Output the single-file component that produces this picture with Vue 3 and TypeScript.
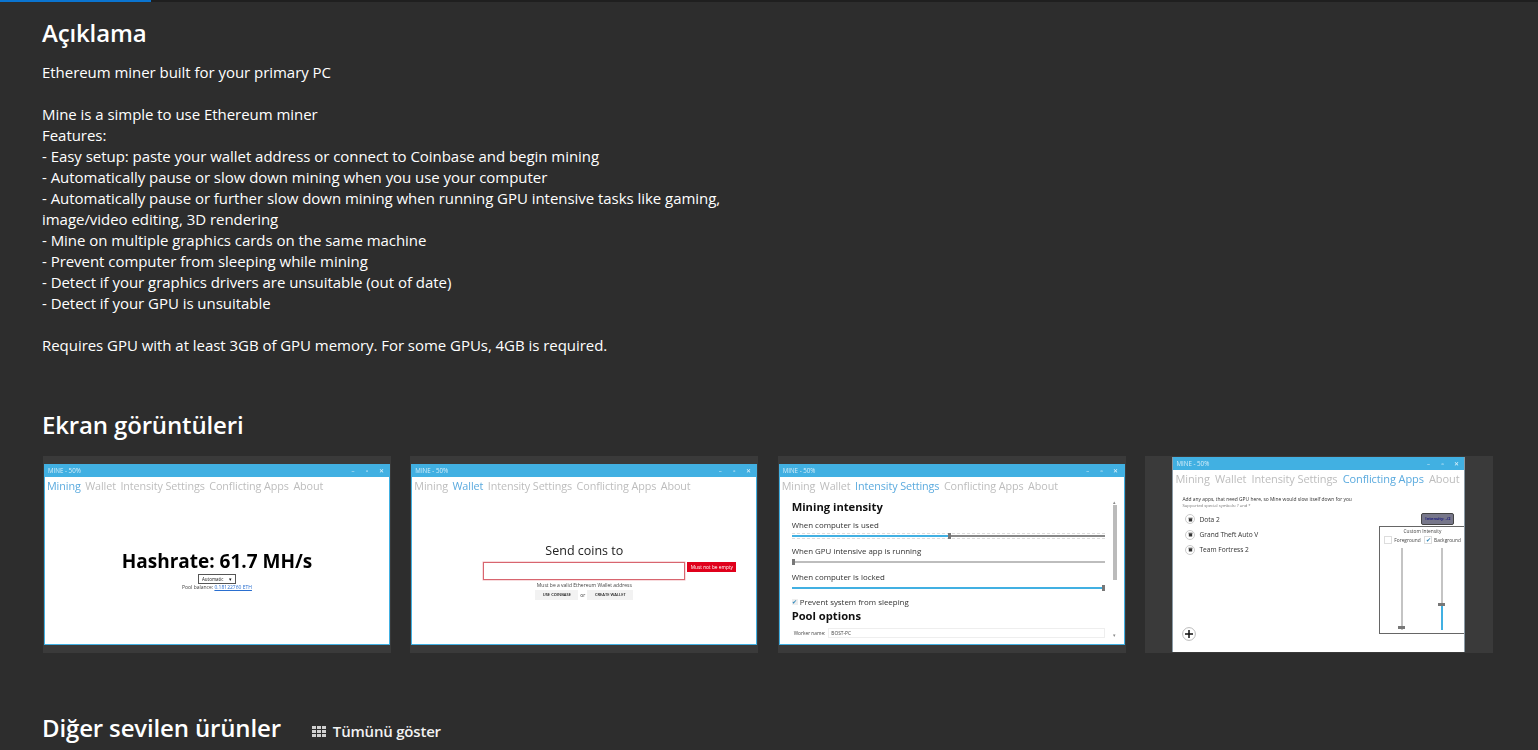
<script setup lang="ts">
const tabs = ['Mining', 'Wallet', 'Intensity Settings', 'Conflicting Apps', 'About']
const copy = [
  'Ethereum miner built for your primary PC',
  '',
  'Mine is a simple to use Ethereum miner',
  'Features:',
  '- Easy setup: paste your wallet address or connect to Coinbase and begin mining',
  '- Automatically pause or slow down mining when you use your computer',
  '- Automatically pause or further slow down mining when running GPU intensive tasks like gaming,',
  'image/video editing, 3D rendering',
  '- Mine on multiple graphics cards on the same machine',
  '- Prevent computer from sleeping while mining',
  '- Detect if your graphics drivers are unsuitable (out of date)',
  '- Detect if your GPU is unsuitable',
  '',
  'Requires GPU with at least 3GB of GPU memory. For some GPUs, 4GB is required.',
]
const apps = ['Dota 2', 'Grand Theft Auto V', 'Team Fortress 2']
const sliders = [
  { label: 'When computer is used', pct: 50, cls: 'ticked' },
  { label: 'When GPU intensive app is running', pct: 0, cls: '' },
  { label: 'When computer is locked', pct: 100, cls: '' },
]
</script>

<template>
  <div class="page">
    <div class="progress"><div class="progress-fill"></div></div>
    <main class="content">
      <h2 class="title first">Açıklama</h2>
      <div class="copy">
        <div v-for="(l, i) in copy" :key="i" class="line">{{ l || '\u00a0' }}</div>
      </div>

      <h2 class="title shots-title">Ekran görüntüleri</h2>
      <div class="shots">
        <!-- Mining -->
        <div class="tile">
          <div class="win">
            <div class="bar"><span>MINE - 50%</span><span class="ctl"><i>–</i><i>▫</i><i>✕</i></span></div>
            <nav class="nav"><span v-for="(t, i) in tabs" :key="t" :class="{ on: i === 0 }">{{ t }}</span></nav>
            <div class="body mining">
              <div class="hash">Hashrate: 61.7 MH/s</div>
              <div class="sel"><span>Automatic</span><span>▾</span></div>
              <div class="tiny">Pool balance: <a>0.18122760 ETH</a></div>
            </div>
          </div>
        </div>

        <!-- Wallet -->
        <div class="tile">
          <div class="win">
            <div class="bar"><span>MINE - 50%</span><span class="ctl"><i>–</i><i>▫</i><i>✕</i></span></div>
            <nav class="nav"><span v-for="(t, i) in tabs" :key="t" :class="{ on: i === 1 }">{{ t }}</span></nav>
            <div class="body wallet">
              <div class="send">Send coins to</div>
              <div class="addr-row">
                <div class="addr"></div>
                <div class="err">Must not be empty</div>
              </div>
              <div class="tiny">Must be a valid Ethereum Wallet address</div>
              <div class="btns"><span class="btn">USE COINBASE</span><span class="tiny">or</span><span class="btn wide">CREATE WALLET</span></div>
            </div>
          </div>
        </div>

        <!-- Intensity -->
        <div class="tile">
          <div class="win">
            <div class="bar"><span>MINE - 50%</span><span class="ctl"><i>–</i><i>▫</i><i>✕</i></span></div>
            <nav class="nav"><span v-for="(t, i) in tabs" :key="t" :class="{ on: i === 2 }">{{ t }}</span></nav>
            <div class="body intensity">
              <div class="settings">
                <div class="h">Mining intensity</div>
                <div v-for="s in sliders" :key="s.label" class="sl-block">
                  <div class="sl-label">{{ s.label }}</div>
                  <div class="track" :class="s.cls">
                    <div class="fill" :style="{ width: s.pct + '%' }"></div>
                    <div class="thumb"></div>
                  </div>
                </div>
                <div class="prevent"><span class="cb">✔</span>Prevent system from sleeping</div>
                <div class="h pool">Pool options</div>
                <div class="worker"><span>Worker name:</span><div class="worker-in">BOST-PC</div></div>
              </div>
              <div class="scroll"><span class="arrow">▴</span><div class="scroll-thumb"></div><span class="arrow down">▾</span></div>
            </div>
          </div>
        </div>

        <!-- Conflicting -->
        <div class="tile tall">
          <div class="win big">
            <div class="bar"><span>MINE - 50%</span><span class="ctl"><i>–</i><i>▫</i><i>✕</i></span></div>
            <nav class="nav"><span v-for="(t, i) in tabs" :key="t" :class="{ on: i === 3 }">{{ t }}</span></nav>
            <div class="body conflict">
              <div class="add-note">Add any apps, that need GPU here, so Mine would slow itself down for you</div>
              <div class="add-sub">Supported special symbols: ? and *</div>
              <div v-for="a in apps" :key="a" class="app">
                <span class="round">
                  <svg viewBox="0 0 10 10" width="7" height="7"><path d="M2 2.5h6v1H2zM2.6 4h4.8v4H2.6z" fill="#333"/></svg>
                </span>{{ a }}
              </div>
              <span class="plus">
                <svg viewBox="0 0 14 14" width="14" height="14"><circle cx="7" cy="7" r="6.4" fill="#fff" stroke="#bbb" stroke-width="1"/><path d="M7 3v8M3 7h8" stroke="#111" stroke-width="1.5"/></svg>
              </span>
              <div class="intensity-btn">Intensity: -/2</div>
              <div class="pop">
                <div class="pop-title">Custom Intensity</div>
                <div class="pop-cols">
                  <div class="pop-col"><div class="pop-check"><span class="cb2"></span>Foreground</div><div class="vtrack"><div class="vthumb low"></div></div></div>
                  <div class="pop-col"><div class="pop-check"><span class="cb2">✔</span>Background</div><div class="vtrack"><div class="vfill"></div><div class="vthumb mid"></div></div></div>
                </div>
              </div>
            </div>
          </div>
        </div>
      </div>

      <div class="more">
        <h2 class="title">Diğer sevilen ürünler</h2>
        <a class="show-all">
          <svg viewBox="0 0 14 11" width="14" height="11" fill="#d0d0d0"><rect v-for="c in 9" :key="c" :x="((c - 1) % 3) * 5" :y="Math.floor((c - 1) / 3) * 4" width="4" height="3"/></svg>
          Tümünü göster
        </a>
      </div>
    </main>
  </div>
</template>

<style>
html, body { margin: 0; background: #2d2d2d; overflow: hidden; }
</style>

<style scoped>
.page { height: 750px; overflow: hidden; background: #2d2d2d; color: #fff; font-family: "Open Sans", "Noto Sans", sans-serif; }
.progress { height: 2px; background: #1f1f1f; }
.progress-fill { width: 151px; height: 2px; background: #0a74d0; }
.content { padding: 0 45px 0 42px; }
.title { margin: 0; font-size: 24px; line-height: 32px; font-weight: 600; letter-spacing: -0.15px; white-space: nowrap; }
.first { padding-top: 15px; }
.copy { margin-top: 13px; font-size: 15px; line-height: 21px; letter-spacing: -0.04px; white-space: pre; color: #fff; }
.shots-title { margin-top: 53px; }
.shots { display: grid; grid-template-columns: repeat(4, 348px); column-gap: 19.33px; margin: 15px 0 0 1px; }
.tile { height: 197px; background: #3a3a3a; box-sizing: border-box; padding: 8px 1px; display: flex; justify-content: center; filter: blur(0.4px); }
.tile.tall { padding: 1px 0; }
.win { flex: 1; box-sizing: border-box; background: #fff; border: 1px solid #41b0e2; border-top: 0; display: flex; flex-direction: column; color: #111; font-family: "Open Sans", sans-serif; overflow: hidden; }
.bar { height: 13px; background: #41b0e2; color: #d7eef9; font-size: 6.2px; display: flex; justify-content: space-between; align-items: center; padding: 0 3px; flex: none; }
.ctl { display: flex; margin-right: -2px; color: #e6f5fc; font-size: 6px; }
.ctl i { font-style: normal; width: 14px; text-align: center; }
.nav { display: flex; gap: 4.5px; padding: 2px 2px 0; font-size: 10.8px; line-height: 14px; color: #bdbdbd; white-space: nowrap; letter-spacing: -0.1px; font-weight: 400; }
.nav .on { color: #5aaade; }
.body { flex: 1; position: relative; }
.tiny { font-size: 5px; line-height: 7px; color: #444; white-space: nowrap; }
.tiny a { color: #2a6fd0; text-decoration: underline; }

.mining { display: flex; flex-direction: column; align-items: center; padding-top: 56px; box-sizing: border-box; }
.hash { font-size: 19px; line-height: 24px; font-weight: 700; color: #000; white-space: nowrap; }
.sel { width: 38px; height: 10px; margin-top: 1px; box-sizing: border-box; border: 1px solid #555; display: flex; justify-content: space-between; align-items: center; font-size: 4.5px; padding: 0 3px; }

.wallet { display: flex; flex-direction: column; align-items: center; padding-top: 49px; box-sizing: border-box; }
.send { font-size: 12.5px; line-height: 18px; color: #222; }
.addr-row { display: flex; gap: 2px; align-items: flex-start; align-self: flex-start; margin: 2px 0 0 71px; }
.addr { width: 202px; height: 18px; box-sizing: border-box; border: 1px solid #d8656f; box-shadow: 0 0 0 0.5px #f0b8bd; }
.err { width: 49px; height: 10px; background: #e0001b; color: #fff; font-size: 4.8px; line-height: 10px; text-align: center; white-space: nowrap; }
.wallet > .tiny { margin-top: 2px; }
.btns { display: flex; align-items: center; gap: 2px; margin-top: 1px; }
.btn { width: 43px; height: 10px; background: #f2f2f2; font-size: 4px; line-height: 10px; text-align: center; font-weight: 600; color: #111; white-space: nowrap; }
.btn.wide { width: 46px; }

.intensity { display: flex; padding: 7px 3px 0 12px; box-sizing: border-box; }
.settings { width: 313px; flex: none; }
.h { font-size: 11.2px; line-height: 14px; font-weight: 700; color: #111; white-space: nowrap; }
.sl-block { height: 26px; }
.sl-label { font-size: 7.9px; line-height: 12px; padding-top: 5px; color: #333; white-space: nowrap; }
.track { position: relative; height: 2px; margin-top: 4px; background: #bdbdbd; display: flex; }
.track.ticked { background: #888; }
.track.ticked::before { content: ""; position: absolute; left: 0; right: 0; top: -2px; bottom: -2px; border-top: 1px dashed #ddd; border-bottom: 1px dashed #ddd; }
.fill { background: #41b0e2; height: 2px; position: relative; }
.thumb { width: 3px; height: 6px; margin-top: -2px; background: #777; flex: none; position: relative; }
.prevent { display: flex; align-items: center; gap: 2px; font-size: 7.9px; line-height: 12px; color: #333; margin-top: 4px; white-space: nowrap; }
.cb { width: 6px; height: 6px; background: #eee; color: #2a86bb; font-size: 6px; line-height: 6px; text-align: center; }
.pool { margin-top: 1px; }
.worker { display: flex; align-items: center; gap: 3px; margin: 5px 0 0 2px; font-size: 4.8px; color: #444; white-space: nowrap; }
.worker-in { flex: 1; height: 10px; border: 1px solid #eee; box-sizing: border-box; line-height: 8px; padding-left: 2px; }
.scroll { margin-left: 7px; width: 6px; display: flex; flex-direction: column; align-items: center; color: #888; }
.scroll-thumb { width: 4px; height: 75px; background: #bbb; }
.arrow { font-size: 5px; line-height: 5px; }
.arrow.down { margin-top: 53px; }

.win.big { flex: none; width: 293px; border: 1px solid #8a9aa5; border-top: 0; border-bottom: 0; }
.big .nav { font-size: 11px; line-height: 16px; gap: 5.2px; padding: 1px 2px 0; letter-spacing: -0.1px; }
.conflict { padding: 9px 0 0 9px; box-sizing: border-box; }
.add-note { font-size: 4.9px; line-height: 7px; color: #333; white-space: nowrap; }
.add-sub { font-size: 4.2px; line-height: 6px; color: #777; }
.app { display: flex; align-items: center; gap: 4px; height: 15.4px; font-size: 6.6px; color: #333; white-space: nowrap; }
.add-sub + .app { margin-top: 2.5px; }
.round { width: 10px; height: 10px; box-sizing: border-box; border: 1px solid #ccc; border-radius: 50%; display: flex; align-items: center; justify-content: center; flex: none; margin-left: 3px; }
.plus { position: absolute; left: 9px; bottom: 11px; line-height: 0; }
.intensity-btn { position: absolute; right: 10px; top: 26px; width: 33px; height: 12px; box-sizing: border-box; background: #77778a; border: 1px solid #444; border-radius: 2px; font-size: 4px; line-height: 10px; text-align: center; color: #1a1a7a; font-weight: 700; white-space: nowrap; }
.pop { position: absolute; right: 0; top: 39px; width: 85px; height: 108px; box-sizing: border-box; border: 1px solid #666; border-right: 0; background: #fff; color: #444; font-size: 4.8px; }
.pop-title { text-align: center; line-height: 7px; padding-top: 1px; }
.pop-cols { display: flex; padding-left: 2px; }
.pop-col { width: 40px; display: flex; flex-direction: column; align-items: center; }
.pop-check { display: flex; align-items: center; gap: 2px; height: 10px; white-space: nowrap; }
.cb2 { width: 8px; height: 8px; box-sizing: border-box; border: 1px solid #ddd; color: #2a86bb; font-size: 6px; line-height: 6px; text-align: center; flex: none; }
.vtrack { position: relative; width: 2px; height: 82px; margin-top: 3px; background: #c4c4c4; }
.vfill { position: absolute; left: 0; right: 0; bottom: 0; height: 26px; background: #41b0e2; }
.vthumb { position: absolute; left: -3px; width: 7px; height: 3px; background: #777; }
.vthumb.low { bottom: 1px; }
.vthumb.mid { bottom: 24px; }

.more { display: flex; align-items: center; gap: 31px; margin-top: 59px; }
.show-all { display: flex; align-items: center; gap: 7px; padding-top: 6px; font-size: 15px; font-weight: 600; color: #f2f2f2; white-space: nowrap; letter-spacing: -0.2px; }
</style>
